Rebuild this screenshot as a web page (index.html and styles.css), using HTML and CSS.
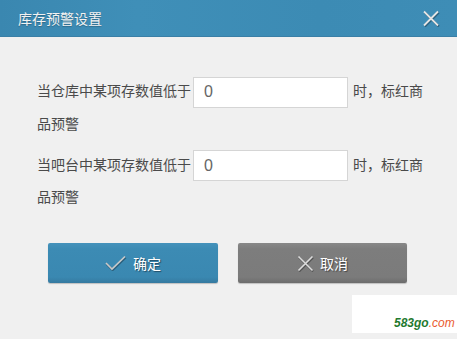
FILE: index.html
```html
<!DOCTYPE html>
<html>
<head>
<meta charset="utf-8">
<link rel="stylesheet" href="styles.css">
</head>
<body>
<div class="dialog">
  <div class="titlebar">
    <span class="title">库存预警设置</span>
    <svg class="close" width="18" height="18" viewBox="0 0 18 18">
      <path d="M2 2.5 L16 16.5 M16 2.5 L2 16.5" stroke="#2a5f7c" stroke-width="2.2" transform="translate(0.8,1)" fill="none"/>
      <path d="M2 2.5 L16 16.5 M16 2.5 L2 16.5" stroke="#e4e4e4" stroke-width="1.8" fill="none"/>
    </svg>
  </div>
  <div class="content">
    <div class="row">当仓库中某项存数值低于<input class="num" type="text" value="0">时，标红商品预警</div>
    <div class="row">当吧台中某项存数值低于<input class="num" type="text" value="0">时，标红商品预警</div>
    <div class="actions">
      <button class="btn btn-ok">
        <svg width="22" height="16" viewBox="0 0 22 16"><path d="M1 8 L7 14 L20 1.5" stroke="#2a5f7c" stroke-width="2.2" fill="none" transform="translate(0.6,1)"/><path d="M1 8 L7 14 L20 1.5" stroke="#c9c9c9" stroke-width="1.7" fill="none"/></svg>
        <span>确定</span>
      </button>
      <button class="btn btn-cancel">
        <svg width="17" height="17" viewBox="0 0 17 17"><path d="M1.5 1.5 L15.5 15.5 M15.5 1.5 L1.5 15.5" stroke="#555" stroke-width="2" fill="none" transform="translate(0.6,1)"/><path d="M1.5 1.5 L15.5 15.5 M15.5 1.5 L1.5 15.5" stroke="#dcdcdc" stroke-width="1.6" fill="none"/></svg>
        <span>取消</span>
      </button>
    </div>
  </div>
  <div class="watermark"><span class="wm-a">583go</span><span class="wm-b">.com</span></div>
</div>
</body>
</html>
```
FILE: styles.css
```css
html, body {
  margin: 0;
  padding: 0;
}
body {
  width: 457px;
  height: 339px;
  background: #f0f0f0;
  font-family: "Noto Sans CJK SC", "Liberation Sans", sans-serif;
  overflow: hidden;
}
.dialog {
  position: relative;
  width: 457px;
  height: 339px;
  background: #f0f0f0;
}
.titlebar {
  height: 36px;
  background: linear-gradient(90deg, #3a87b0 0%, #3f8fb8 30%, #3c8bb4 70%, #3e8db6 100%);
  border-bottom: 1px solid #3a7fa6;
  display: flex;
  align-items: center;
  justify-content: space-between;
  padding: 0 17px 0 18px;
}
.title {
  color: #f2f2f2;
  font-size: 14px;
  line-height: 36px;
  text-shadow: 0 1px 1px rgba(0,0,0,0.25);
}
.close {
  display: block;
}
.content {
  padding: 38px 30px 0 37px;
}
.row {
  width: 388px;
  font-size: 14px;
  line-height: 31px;
  color: #4a4a4a;
  margin-bottom: 10px;
}
.num {
  box-sizing: border-box;
  width: 155px;
  height: 31px;
  margin: 0 5px 0 2px;
  padding: 0 10px;
  border: 1px solid #d5d5d5;
  background: #fff;
  font-family: "Liberation Sans", sans-serif;
  font-size: 16px;
  color: #666;
  vertical-align: middle;
  outline: none;
}
.actions {
  display: flex;
  gap: 20px;
  margin-top: 31px;
  padding-left: 11px;
}
.btn {
  width: 170px;
  height: 40px;
  border: none;
  border-radius: 2px;
  display: flex;
  align-items: center;
  justify-content: center;
  gap: 6px;
  font-family: "Noto Sans CJK SC", sans-serif;
  font-size: 14px;
  color: #fff;
  text-shadow: 1px 1px 1px rgba(0,0,0,0.45);
  padding: 0;
}
.btn svg {
  display: block;
}
.btn-ok {
  background: linear-gradient(180deg, #4592bb 0%, #3c8bb4 15%, #3a88b1 85%, #3579a0 100%);
  box-shadow: 0 1px 1px rgba(0,0,0,0.2);
}
.btn-cancel {
  width: 169px;
  background: linear-gradient(180deg, #888 0%, #7d7d7d 15%, #7b7b7b 85%, #6c6c6c 100%);
  box-shadow: 0 1px 1px rgba(0,0,0,0.2);
}
.watermark {
  position: absolute;
  left: 352px;
  top: 295px;
  width: 105px;
  height: 38px;
  background: #fff;
  box-sizing: border-box;
  padding: 22px 0 0 42px;
  font-family: "Liberation Sans", sans-serif;
  font-size: 12px;
  font-style: italic;
  font-weight: bold;
  line-height: 13px;
  white-space: nowrap;
}
.wm-a { color: #1f7a2f; }
.wm-b { color: #ea5a2e; font-weight: normal; }
```
